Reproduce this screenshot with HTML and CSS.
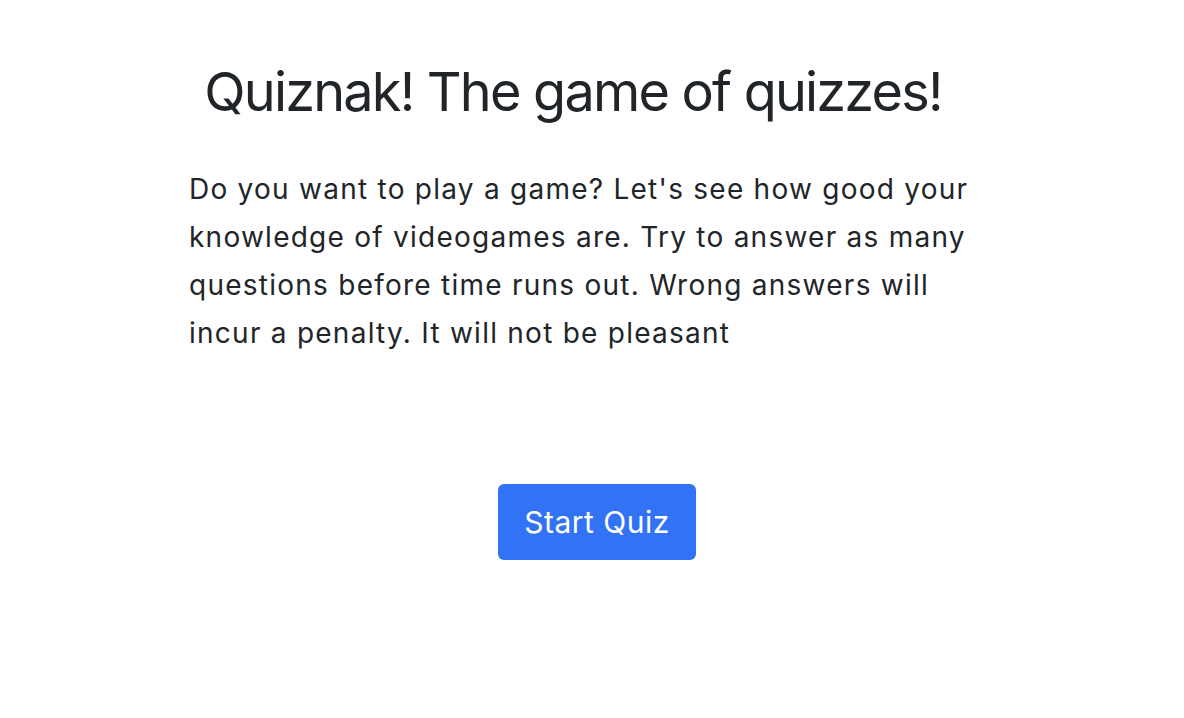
FILE: index.html
```html
<!DOCTYPE html>
<html>
<head>
<meta charset="utf-8">
<link rel="stylesheet" href="styles.css">
</head>
<body>
<main class="page">
  <section class="intro">
    <h1 class="title">Quiznak! The game of quizzes!</h1>
    <p class="lead">Do you want to play a game? Let's see how good your knowledge of videogames are. Try to answer as many questions before time runs out. Wrong answers will incur a penalty. It will not be pleasant</p>
  </section>
  <div class="actions">
    <button class="btn">Start Quiz</button>
  </div>
</main>
</body>
</html>
```
FILE: styles.css
```css
html, body {
  margin: 0;
  padding: 0;
  background: #ffffff;
}
body {
  font-family: Inter, "Noto Sans", sans-serif;
  color: #212529;
}
.page {
  display: flex;
  flex-direction: column;
  padding-top: 58px;
}
.intro {
  width: 800px;
  margin-left: 173px;
}
.title {
  margin: 0;
  text-align: center;
  font-size: 54px;
  font-weight: 400;
  line-height: 68px;
  letter-spacing: -1.8px;
}
.lead {
  margin: 39px 0 0 16px;
  width: 800px;
  font-size: 28px;
  line-height: 48px;
  letter-spacing: 1.25px;
}
.actions {
  display: flex;
  justify-content: center;
  margin-top: 127px;
  padding-left: 10px;
}
.btn {
  font-family: Inter, "Noto Sans", sans-serif;
  background: #3273f6;
  color: #ffffff;
  border: none;
  border-radius: 6px;
  width: 198px;
  height: 76px;
  font-size: 30px;
  letter-spacing: 0.5px;
  padding: 0;
}
```
